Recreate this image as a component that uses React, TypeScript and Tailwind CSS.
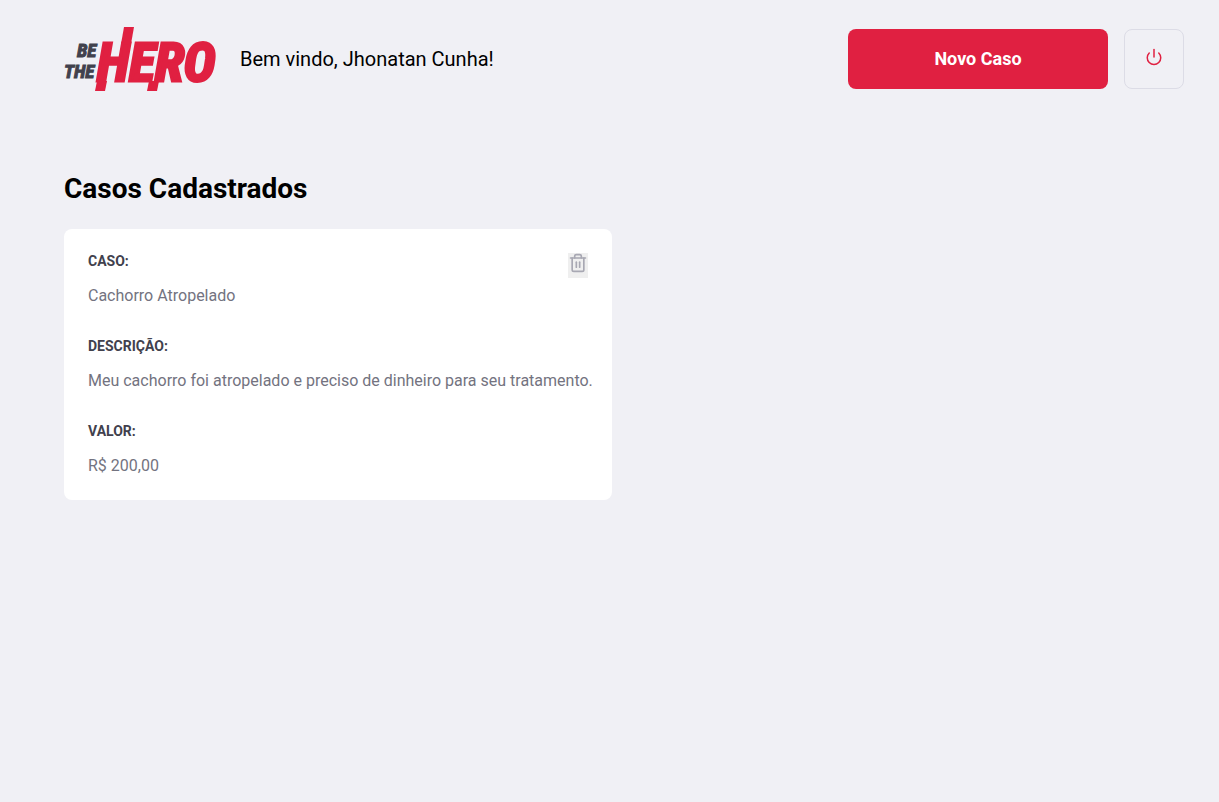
import { FiPower, FiTrash2 } from "react-icons/fi";

type Incident = { id: number; title: string; description: string; value: string };

const incidents: Incident[] = [
  {
    id: 1,
    title: "Cachorro Atropelado",
    description: "Meu cachorro foi atropelado e preciso de dinheiro para seu tratamento.",
    value: "R$ 200,00",
  },
];

function Logo() {
  return (
    <svg
      role="img"
      aria-label="Be The Hero"
      width="152"
      height="64"
      viewBox="0 0 152 64"
      className="shrink-0 overflow-visible font-['Roboto_Condensed',Roboto,sans-serif] font-bold italic"
    >
      <g fill="#41414d" stroke="#41414d" strokeWidth="1">
        <text x="13" y="30" fontSize="19">BE</text>
        <text x="0" y="51" fontSize="19">THE</text>
      </g>
      <text x="33" y="54" fontSize="54" fill="#e02041" stroke="#e02041" strokeWidth="3">HERO</text>
      {/* Flourishes that lengthen the stems of the H and the R */}
      <g fill="#e02041">
        <path d="M33 54h10l-2 10H31z" />
        <path d="M60 0h10l-3 17H57z" />
        <path d="M85 54h10l-2 10H83z" />
      </g>
    </svg>
  );
}

function Field({ label, value }: { label: string; value: string }) {
  return (
    <div>
      <dt className="text-sm leading-4 font-bold text-[#41414d] uppercase">{label}</dt>
      <dd className="mt-4 text-base leading-[21px] text-[#737380]">{value}</dd>
    </div>
  );
}

export default function App() {
  return (
    <div className="min-h-screen bg-[#f0f0f5] pt-[27px] pr-[35px] pb-8 pl-16 font-[Roboto,sans-serif] text-black">
      <header className="flex items-center">
        <Logo />
        <span className="ml-6 text-xl">Bem vindo, Jhonatan Cunha!</span>
        <a
          href="#novo"
          className="ml-auto flex h-[60px] w-[260px] items-center justify-center rounded-lg bg-[#e02041] text-lg font-bold text-white"
        >
          Novo Caso
        </a>
        <button
          type="button"
          aria-label="Sair"
          className="ml-4 flex h-[60px] w-[60px] items-center justify-center rounded-lg border border-[#dcdce6] pb-1"
        >
          <FiPower size={18} color="#e02041" />
        </button>
      </header>

      <main>
        <h1 className="mt-20 text-[28px] leading-9 font-bold">Casos Cadastrados</h1>
        <ul className="mt-[22px] grid grid-cols-2 gap-6">
          {incidents.map((incident) => (
            <li key={incident.id} className="relative rounded-lg bg-white py-6 pr-3 pl-6">
              <dl className="flex flex-col gap-8">
                <Field label="Caso:" value={incident.title} />
                <Field label="Descrição:" value={incident.description} />
                <Field label="Valor:" value={incident.value} />
              </dl>
              <button
                type="button"
                aria-label="Excluir caso"
                className="absolute top-6 right-6 flex h-[25px] w-5 items-start bg-[#efefef]"
              >
                <FiTrash2 size={20} color="#a8a8b3" />
              </button>
            </li>
          ))}
        </ul>
      </main>
    </div>
  );
}
